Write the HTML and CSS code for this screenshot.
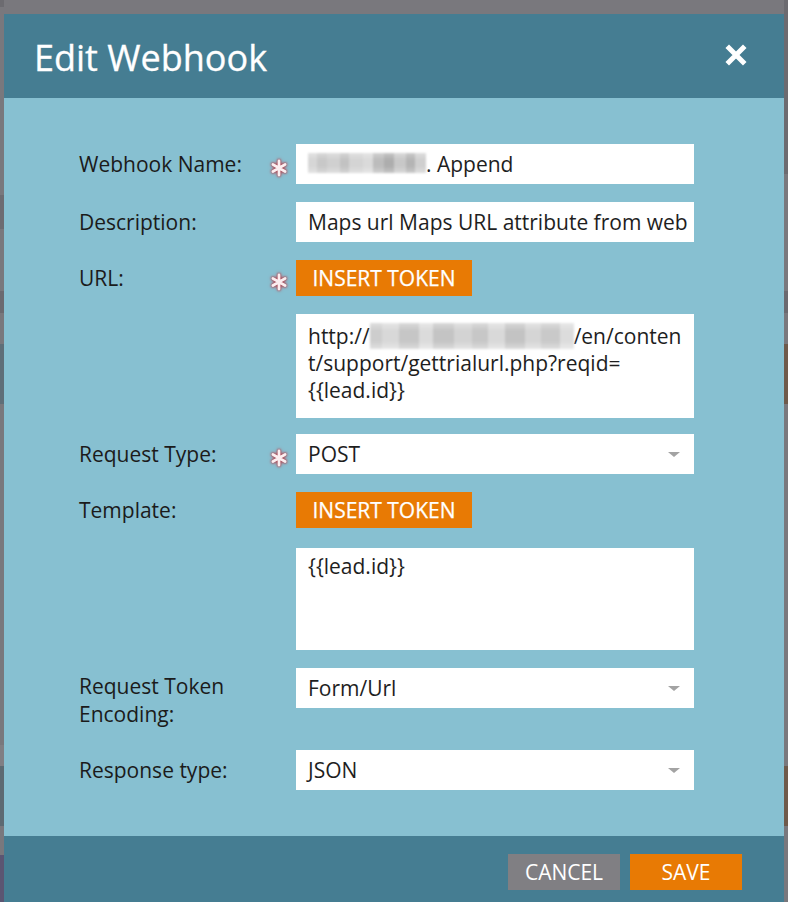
FILE: index.html
```html
<!DOCTYPE html>
<html lang="en">
<head>
<meta charset="utf-8">
<title>Edit Webhook</title>
<link rel="stylesheet" href="styles.css">
</head>
<body>
<div class="page">
  <div class="gutter gutter-left"></div>
  <div class="modal">
    <div class="modal-header">
      <h1 class="modal-title">Edit Webhook</h1>
      <svg class="close-icon" width="22" height="22" viewBox="0 0 22 22" aria-label="Close">
        <path d="M4 4 L18 18 M18 4 L4 18" stroke="#ffffff" stroke-width="5" stroke-linecap="square"/>
      </svg>
    </div>
    <div class="modal-body">
      <div class="form-grid">
        <div class="label">Webhook Name:</div>
        <div class="req"><svg class="asterisk" width="18" height="18" viewBox="0 0 18 18"><path d="M9 2 V16 M2.9 5.5 L15.1 12.5 M15.1 5.5 L2.9 12.5" stroke="#fbeef0" stroke-width="2.8" stroke-linecap="round"/></svg></div>
        <div class="field input"><span class="redact redact-name"></span>. Append</div>

        <div class="label">Description:</div>
        <div class="req"></div>
        <div class="field input">Maps url Maps URL attribute from web</div>

        <div class="label">URL:</div>
        <div class="req"><svg class="asterisk" width="18" height="18" viewBox="0 0 18 18"><path d="M9 2 V16 M2.9 5.5 L15.1 12.5 M15.1 5.5 L2.9 12.5" stroke="#fbeef0" stroke-width="2.8" stroke-linecap="round"/></svg></div>
        <div class="field"><button class="token-btn">INSERT TOKEN</button></div>

        <div class="label"></div>
        <div class="req"></div>
        <div class="field textarea textarea-url">
          <div class="ta-line">http://<span class="redact redact-url"></span>/en/conten</div>
          <div class="ta-line">t/support/gettrialurl.php?reqid=</div>
          <div class="ta-line">{{lead.id}}</div>
        </div>

        <div class="label">Request Type:</div>
        <div class="req"><svg class="asterisk" width="18" height="18" viewBox="0 0 18 18"><path d="M9 2 V16 M2.9 5.5 L15.1 12.5 M15.1 5.5 L2.9 12.5" stroke="#fbeef0" stroke-width="2.8" stroke-linecap="round"/></svg></div>
        <div class="field input select"><span>POST</span><span class="caret"></span></div>

        <div class="label">Template:</div>
        <div class="req"></div>
        <div class="field"><button class="token-btn">INSERT TOKEN</button></div>

        <div class="label"></div>
        <div class="req"></div>
        <div class="field textarea textarea-template">
          <div class="ta-line">{{lead.id}}</div>
        </div>

        <div class="label label-multi">Request Token<br>Encoding:</div>
        <div class="req"></div>
        <div class="field input select select-top"><span>Form/Url</span><span class="caret"></span></div>

        <div class="label">Response type:</div>
        <div class="req"></div>
        <div class="field input select"><span>JSON</span><span class="caret"></span></div>
      </div>
    </div>
    <div class="modal-footer">
      <button class="btn btn-cancel">CANCEL</button>
      <button class="btn btn-save">SAVE</button>
    </div>
  </div>
  <div class="gutter gutter-right"></div>
</div>
</body>
</html>
```
FILE: styles.css
```css
html, body {
  margin: 0;
  padding: 0;
  height: 902px;
  overflow: hidden;
  background: #79787d;
  font-family: "Open Sans", "Liberation Sans", sans-serif;
}

.page {
  display: grid;
  grid-template-columns: 4px 780px 4px;
  height: 902px;
}

.gutter {
  height: 902px;
}

.gutter-left {
  background: linear-gradient(180deg,
    #6c6b70 0 7px, #79787d 7px 195px, #6d6c72 195px 229px, #79787d 229px 291px,
    #6b6a70 291px 313px, #79787d 313px 344px, #5f6e78 344px 404px,
    #79787d 404px 745px, #807f84 745px 766px, #5d6a72 766px 826px,
    #79787d 826px 855px, #5b5572 855px 902px);
}

.gutter-right {
  background: linear-gradient(180deg,
    #6c6b70 0 174px, #79787d 174px 291px, #6b6a70 291px 313px,
    #79787d 313px 344px, #6e5a4b 344px 404px, #79787d 404px 766px,
    #6e5a4b 766px 826px, #79787d 826px 902px);
}

.modal {
  margin-top: 14px;
  display: flex;
  flex-direction: column;
}

.modal-header {
  height: 84px;
  box-sizing: border-box;
  background: #457d92;
  display: flex;
  align-items: center;
  justify-content: space-between;
  padding: 4px 37px 0 30px;
}

.modal-title {
  margin: 0;
  font-size: 36px;
  font-weight: 400;
  color: #ffffff;
  line-height: 50px;
  -webkit-text-stroke: 0.3px #ffffff;
}

.close-icon {
  display: block;
  margin-top: -6px;
}

.modal-body {
  background: #87c0d1;
  padding: 46px 90px 46px 75px;
}

.form-grid {
  display: grid;
  grid-template-columns: 191px 26px 398px;
  row-gap: 18px;
}

.label {
  font-size: 21px;
  line-height: 28px;
  color: #1b1b1b;
  align-self: center;
}

.label-multi {
  align-self: start;
  padding: 4px 0;
}

.req {
  display: flex;
  align-items: center;
  padding-top: 7px;
}

.asterisk {
  display: block;
  filter: drop-shadow(0 0 1px #9a3441) drop-shadow(0 0 1.5px #c2606c);
}

.field {
  box-sizing: border-box;
  min-width: 0;
}

.input {
  height: 40px;
  background: #ffffff;
  padding: 0 12px;
  font-size: 21px;
  line-height: 40px;
  color: #1e1e1e;
  white-space: nowrap;
  overflow: hidden;
  display: flex;
  align-items: center;
}

.select {
  justify-content: space-between;
}

.select-top {
  align-self: start;
}

.caret {
  width: 0;
  height: 0;
  border-left: 6px solid transparent;
  border-right: 6px solid transparent;
  border-top: 5px solid #a3a3a3;
  margin-right: 2px;
}

.token-btn {
  display: block;
  width: 176px;
  height: 36px;
  border: 0;
  padding: 0;
  background: #e87a04;
  color: #ffffff;
  font-family: "Open Sans", "Liberation Sans", sans-serif;
  font-size: 21px;
  line-height: 36px;
  -webkit-text-stroke: 0.25px #ffffff;
  cursor: pointer;
}

.textarea {
  background: #ffffff;
  padding: 9px 12px 0 12px;
  font-size: 21px;
  line-height: 27px;
  color: #1e1e1e;
  overflow: hidden;
}

.textarea-url {
  height: 104px;
  margin-bottom: -2px;
}

.textarea-template {
  height: 102px;
  padding-top: 5px;
  margin-top: 2px;
}

.ta-line {
  white-space: nowrap;
}

.redact {
  display: inline-block;
  vertical-align: middle;
  filter: blur(1.3px);
}

.redact-name {
  width: 118px;
  height: 20px;
  margin-top: -2px;
  background:
    linear-gradient(180deg, rgba(255,255,255,0.3), rgba(255,255,255,0) 35%, rgba(255,255,255,0) 65%, rgba(255,255,255,0.3)),
    linear-gradient(90deg,
      #d6d6d6 0 8%, #c8c8c8 8% 16%, #d0d0d0 16% 27%, #c2c2c2 27% 35%,
      #d4d4d4 35% 47%, #dadada 47% 55%, #bcbcbc 55% 64%, #adadad 64% 73%,
      #c8c8c8 73% 83%, #b4b4b4 83% 91%, #cfcfcf 91% 100%);
}

.redact-url {
  width: 204px;
  height: 26px;
  margin-top: -4px;
  background:
    linear-gradient(180deg, rgba(255,255,255,0.35), rgba(255,255,255,0) 30%, rgba(255,255,255,0) 70%, rgba(255,255,255,0.4)),
    linear-gradient(90deg,
      #cdcdcd 0 6%, #d8d8d8 6% 14%, #c6c6c6 14% 24%, #dbdbdb 24% 31%,
      #c4c4c4 31% 41%, #d3d3d3 41% 50%, #c7c7c7 50% 58%, #d9d9d9 58% 66%,
      #c3c3c3 66% 76%, #d5d5d5 76% 84%, #c9c9c9 84% 93%, #dcdcdc 93% 100%);
}

.modal-footer {
  height: 66px;
  box-sizing: border-box;
  background: #457d92;
  display: flex;
  justify-content: flex-end;
  align-items: flex-start;
  gap: 10px;
  padding: 18px 42px 0 0;
}

.btn {
  width: 112px;
  height: 36px;
  border: 0;
  padding: 0;
  color: #ffffff;
  font-family: "Open Sans", "Liberation Sans", sans-serif;
  font-size: 21px;
  line-height: 36px;
  cursor: pointer;
}

.btn-cancel {
  background: #807f83;
}

.btn-save {
  background: #e87a04;
}
```
